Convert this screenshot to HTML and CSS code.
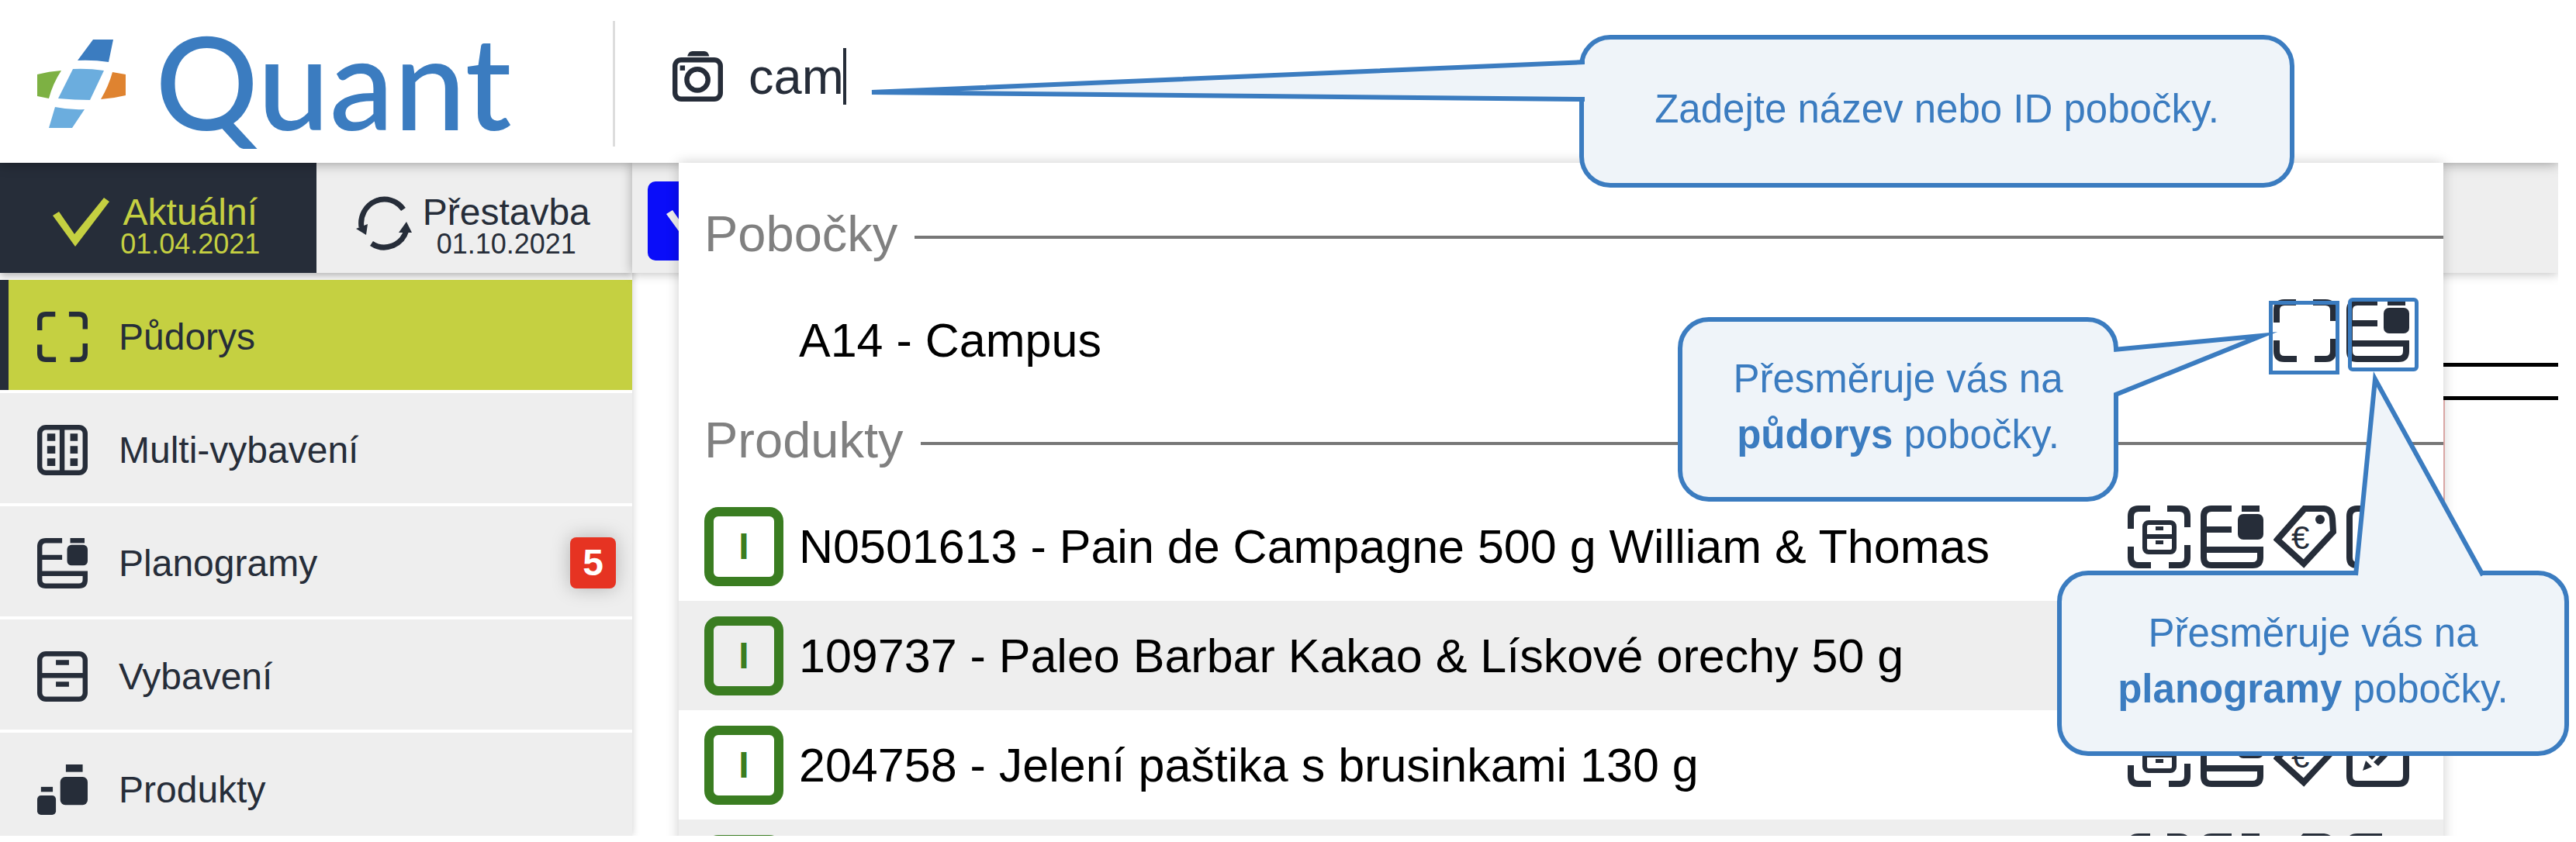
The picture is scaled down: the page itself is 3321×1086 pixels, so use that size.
FILE: index.html
```html
<!DOCTYPE html>
<html lang="cs">
<head>
    <meta charset="UTF-8">
    <meta name="viewport" content="width=device-width, initial-scale=1.0">
    <title>Quant</title>
    <link rel="stylesheet" href="styles.css">
</head>
<body>
    <!-- Icon set -->
    <svg class="sprite" aria-hidden="true">
        <symbol id="i-floor" viewBox="0 0 81 81">
            <path class="line" d="M4 30V14Q4 4 14 4H29M51 4H67Q77 4 77 14V28M77 51V67Q77 77 67 77H53M30 77H14Q4 77 4 67V53"/>
        </symbol>
        <symbol id="i-multi" viewBox="0 0 81 81">
            <rect class="line" x="4" y="4" width="73" height="73" rx="10"/>
            <path class="line" d="M40 4V77"/>
            <path d="M16 14h13v12H16zM16 34h13v12H16zM16 54h13v12H16zM53 14h12v12H53zM53 34h12v12H53zM53 54h12v12H53z"/>
        </symbol>
        <symbol id="i-plano" viewBox="0 0 81 81">
            <path class="line" d="M40 4H14Q4 4 4 14V67Q4 77 14 77H67Q77 77 77 67V57H4M4 31H40"/>
            <rect x="53" y="0" width="23" height="8"/>
            <rect x="48" y="11" width="33" height="33" rx="7"/>
        </symbol>
        <symbol id="i-cabinet" viewBox="0 0 81 81">
            <rect class="line" x="4" y="4" width="73" height="73" rx="10"/>
            <path class="line" d="M4 39H77"/>
            <path d="M30 14h21v8H30zM30 49h21v8H30z"/>
        </symbol>
        <symbol id="i-products" viewBox="0 0 81 81">
            <rect x="46" y="0" width="27" height="12"/>
            <rect x="37" y="20" width="44" height="45" rx="8"/>
            <rect x="6" y="36" width="19" height="8"/>
            <rect x="0" y="50" width="30" height="31" rx="6"/>
        </symbol>
        <symbol id="i-place" viewBox="0 0 81 81">
            <path class="line" d="M4 30V14Q4 4 14 4H29M51 4H67Q77 4 77 14V28M77 51V67Q77 77 67 77H53M30 77H14Q4 77 4 67V53"/>
            <rect class="line thin" x="22" y="22" width="38" height="38" rx="5"/>
            <path class="line thin" d="M22 40H60"/>
            <path d="M36 27h10v5H36zM36 45h10v5H36z"/>
        </symbol>
        <symbol id="i-tag" viewBox="0 0 81 81">
            <path class="line" d="M5 44L40 4H65Q75 5 76 17L77 34L39 75Z"/>
            <circle cx="60" cy="18" r="6"/>
            <text x="23" y="56" font-size="42">€</text>
        </symbol>
        <symbol id="i-edit" viewBox="0 0 81 81">
            <path class="line" d="M46 4H14Q4 4 4 14V67Q4 77 14 77H67Q77 77 77 67V38"/>
            <path d="M21 60L25 47L33 55ZM28 41L64 4L69 9L33 46ZM35 49L72 12L77 16L41 54Z"/>
        </symbol>
        <symbol id="i-camera" viewBox="0 0 81 81">
            <path d="M24 8Q26 0 32 0H51Q57 0 59 8Z"/>
            <rect class="line" x="4" y="14" width="73" height="63" rx="10"/>
            <rect x="12" y="23" width="8" height="8"/>
            <circle class="line" cx="40" cy="46" r="17"/>
        </symbol>
    </svg>

    <div class="app">
        <header class="header">
            <a class="logo" href="#">
                <svg class="logo-mark" viewBox="0 0 114 114" aria-hidden="true">
                    <path fill="#3b7cc0" d="M72 0H98L92 29Q72 26 52 27Z"/>
                    <path fill="#6badde" d="M46 38Q66 37 86 40L68 78Q48 78 27 76Z"/>
                    <path fill="#6badde" d="M23 87Q42 91 61 90L45 114H15Z"/>
                    <path fill="#7db143" d="M0 45Q15 41 31 40Q20 57 15 76L0 73Z"/>
                    <path fill="#df8330" d="M97 42L114 45V72Q98 76 82 77Q92 60 97 42Z"/>
                </svg>
                <span class="logo-text">Quant</span>
            </a>
            <label class="search">
                <svg class="icon" role="img" aria-label="Hledat"><use href="#i-camera"/></svg>
                <input class="search-input" type="text" value="cam">
                <span class="caret"></span>
            </label>
        </header>

        <div class="body">
            <aside class="sidebar">
                <div class="tabs">
                    <button class="tab active" type="button">
                        <svg class="tab-icon" viewBox="0 0 74 64"><path d="M0 23L8 18L28 47L66 0L73 5L29 63Z"/></svg>
                        <span class="tab-label">Aktuální<small>01.04.2021</small></span>
                    </button>
                    <button class="tab" type="button">
                        <svg class="tab-icon" viewBox="0 0 72 72">
                            <path class="line medium" d="M61 19A30 31 0 0 0 7 42M20 63A30 31 0 0 0 65 46"/>
                            <path d="M0 44L15 38L13 52ZM55 49L65 35L72 49Z"/>
                        </svg>
                        <span class="tab-label">Přestavba<small>01.10.2021</small></span>
                    </button>
                </div>
                <nav class="menu">
                    <a class="menu-item active" href="#"><svg class="icon"><use href="#i-floor"/></svg>Půdorys</a>
                    <a class="menu-item" href="#"><svg class="icon"><use href="#i-multi"/></svg>Multi-vybavení</a>
                    <a class="menu-item" href="#"><svg class="icon"><use href="#i-plano"/></svg>Planogramy<span class="count">5</span></a>
                    <a class="menu-item" href="#"><svg class="icon"><use href="#i-cabinet"/></svg>Vybavení</a>
                    <a class="menu-item" href="#"><svg class="icon"><use href="#i-products"/></svg>Produkty</a>
                </nav>
            </aside>

            <main class="main">
                <div class="toolbar">
                    <button class="confirm" type="button" aria-label="Potvrdit">
                        <svg class="tab-icon" viewBox="0 0 74 64"><path d="M0 23L8 18L28 47L66 0L73 5L29 63Z"/></svg>
                    </button>
                </div>
                <div class="floorplan">
                    <div class="wall"></div>
                    <div class="zone"></div>
                </div>

                <!-- Search results -->
                <div class="results">
                    <h2 class="group"><span>Pobočky</span></h2>
                    <div class="row">
                        <span class="status-space"></span>
                        <span class="name">A14 - Campus</span>
                        <span class="actions">
                            <button type="button" aria-label="Půdorys"><svg><use href="#i-floor"/></svg></button>
                            <button type="button" aria-label="Planogramy"><svg><use href="#i-plano"/></svg></button>
                        </span>
                    </div>
                    <h2 class="group"><span>Produkty</span></h2>
                    <div class="row">
                        <span class="status">I</span>
                        <span class="name">N0501613 - Pain de Campagne 500 g William &amp; Thomas</span>
                        <span class="actions">
                            <button type="button" aria-label="Umístění"><svg><use href="#i-place"/></svg></button>
                            <button type="button" aria-label="Planogramy"><svg><use href="#i-plano"/></svg></button>
                            <button type="button" aria-label="Cena"><svg><use href="#i-tag"/></svg></button>
                            <button type="button" aria-label="Upravit"><svg><use href="#i-edit"/></svg></button>
                        </span>
                    </div>
                    <div class="row shaded">
                        <span class="status">I</span>
                        <span class="name">109737 - Paleo Barbar Kakao &amp; Lískové orechy 50 g</span>
                        <span class="actions">
                            <button type="button" aria-label="Umístění"><svg><use href="#i-place"/></svg></button>
                            <button type="button" aria-label="Planogramy"><svg><use href="#i-plano"/></svg></button>
                            <button type="button" aria-label="Cena"><svg><use href="#i-tag"/></svg></button>
                            <button type="button" aria-label="Upravit"><svg><use href="#i-edit"/></svg></button>
                        </span>
                    </div>
                    <div class="row">
                        <span class="status">I</span>
                        <span class="name">204758 - Jelení paštika s brusinkami 130 g</span>
                        <span class="actions">
                            <button type="button" aria-label="Umístění"><svg><use href="#i-place"/></svg></button>
                            <button type="button" aria-label="Planogramy"><svg><use href="#i-plano"/></svg></button>
                            <button type="button" aria-label="Cena"><svg><use href="#i-tag"/></svg></button>
                            <button type="button" aria-label="Upravit"><svg><use href="#i-edit"/></svg></button>
                        </span>
                    </div>
                    <div class="row shaded">
                        <span class="status"></span>
                        <span class="name"></span>
                        <span class="actions">
                            <button type="button" aria-label="Umístění"><svg><use href="#i-place"/></svg></button>
                            <button type="button" aria-label="Planogramy"><svg><use href="#i-plano"/></svg></button>
                            <button type="button" aria-label="Cena"><svg><use href="#i-tag"/></svg></button>
                            <button type="button" aria-label="Upravit"><svg><use href="#i-edit"/></svg></button>
                        </span>
                    </div>
                </div>
            </main>
        </div>
    </div>

    <!-- Help callouts -->
    <div class="mark mark-floor"></div>
    <div class="mark mark-plano"></div>

    <div class="callout callout-search">
        <svg class="tail" width="926" height="80"><path d="M926 23L7 62L926 71"/></svg>
        <p>Zadejte název nebo ID pobočky.</p>
    </div>
    <div class="callout callout-floor">
        <svg class="tail" width="220" height="100"><path d="M0 31L191 13L0 90"/></svg>
        <p>Přesměruje vás na<br><b>půdorys</b> pobočky.</p>
    </div>
    <div class="callout callout-plano">
        <svg class="tail" width="180" height="270"><path d="M7 265L32 12L171 265"/></svg>
        <p>Přesměruje vás na<br><b>planogramy</b> pobočky.</p>
    </div>
</body>
</html>
```

FILE: styles.css
```css
* {
    box-sizing: border-box;
}
body {
    position: relative;
    margin: 0;
    padding: 0 23px 8px 0;
    height: 100vh;
    overflow: hidden;
    background: #fff;
    color: #262d39;
    font-family: "Liberation Sans", Arial, sans-serif;
    font-size: 48px;
}
button {
    margin: 0;
    padding: 0;
    border: none;
    background: none;
    color: inherit;
    font: inherit;
    cursor: pointer;
}
a {
    color: inherit;
    text-decoration: none;
}
svg {
    display: block;
    fill: currentColor;
}
.sprite {
    display: none;
}
.line {
    fill: none;
    stroke: currentColor;
    stroke-width: 8;
}
.medium {
    stroke-width: 7;
}
.thin {
    stroke-width: 6;
}
.icon {
    flex: none;
    width: 65px;
    height: 65px;
}
.app {
    display: flex;
    flex-direction: column;
    height: 100%;
    overflow: hidden;
}

/* --- HEADER --- */
.header {
    position: relative;
    z-index: 2;
    flex: none;
    display: flex;
    align-items: center;
    height: 210px;
    padding-top: 6px;
    background: #fff;
    box-shadow: 0 0 16px rgba(0, 0, 0, 0.4);
}
.logo {
    display: flex;
    align-items: center;
    gap: 38px;
    width: 793px;
    height: 162px;
    padding-left: 48px;
    border-right: 3px solid #ddd;
    color: #3b7cc0;
}
.logo-mark {
    width: 114px;
    height: 114px;
}
.logo-text {
    padding-bottom: 8px;
    font-family: Lato, sans-serif;
    font-size: 166px;
    font-weight: 500;
    line-height: 162px;
}
.search {
    display: flex;
    align-items: center;
    padding: 0 0 20px 74px;
}
.search-input {
    width: 122px;
    margin-left: 33px;
    padding: 0;
    border: none;
    outline: none;
    background: none;
    color: inherit;
    font-family: inherit;
    font-size: 65px;
}
.caret {
    width: 4px;
    height: 73px;
    background: #262d39;
}

/* --- SIDEBAR --- */
.body {
    flex: 1;
    display: flex;
    min-height: 0;
}
.sidebar {
    flex: none;
    width: 815px;
    box-shadow: 0 0 10px rgba(0, 0, 0, 0.2);
}
.tabs {
    display: flex;
    box-shadow: 0 4px 10px rgba(0, 0, 0, 0.3);
}
.tab {
    flex: 1;
    display: flex;
    justify-content: center;
    align-items: center;
    gap: 13px;
    height: 142px;
    padding: 24px 4px 0 0;
    background: #eee;
}
.tab.active {
    background: #262d39;
    color: #c5d041;
}
.tab-icon {
    flex: none;
    width: 74px;
    height: 72px;
    margin-bottom: 12px;
    overflow: visible;
}
.tab-label {
    line-height: 44px;
}
.tab-label small {
    display: block;
    font-size: 36px;
    line-height: 38px;
}
.menu {
    display: flex;
    flex-direction: column;
    gap: 4px;
    padding-top: 9px;
}
.menu-item {
    flex: none;
    display: flex;
    align-items: center;
    gap: 40px;
    height: 142px;
    padding: 4px 21px 0 48px;
    background: #eee;
}
.menu-item.active {
    background: #c5d041;
    box-shadow: inset 11px 0 #262d39;
}
.count {
    width: 59px;
    margin-left: auto;
    border-radius: 8px;
    background: #e63322;
    box-shadow: 0 0 24px rgba(0, 0, 0, 0.25);
    color: #fff;
    font-weight: bold;
    line-height: 66px;
    text-align: center;
}

/* --- MAIN --- */
.main {
    position: relative;
    flex: 1;
    min-width: 0;
}
.toolbar {
    display: flex;
    align-items: center;
    height: 142px;
    padding: 8px 0 0 20px;
    background: #eee;
    box-shadow: 0 0 14px rgba(0, 0, 0, 0.3);
}
.confirm {
    height: 102px;
    padding: 12px 24px 0;
    border-radius: 10px;
    background: #0a0df9;
    color: #eee;
}
.floorplan {
    width: 148px;
    margin: 116px 0 0 auto;
}
.wall {
    height: 48px;
    border: solid #000;
    border-width: 5px 0;
}
.zone {
    height: 130px;
    border-left: 2px solid #efb8b4;
}

/* --- SEARCH RESULTS --- */
.results {
    position: absolute;
    z-index: 3;
    top: 0;
    left: 60px;
    right: 148px;
    padding-top: 33px;
    background: #fff;
    box-shadow: 0 0 16px rgba(0, 0, 0, 0.2);
    color: #000;
}
.group {
    display: flex;
    align-items: center;
    gap: 22px;
    height: 125px;
    margin: 0;
    padding-left: 33px;
    color: #808080;
    font-size: 65px;
    font-weight: normal;
}
.group span {
    padding-bottom: 8px;
}
.group::after {
    content: "";
    flex: 1;
    height: 4px;
    background: #777;
}
.row {
    display: flex;
    align-items: center;
    gap: 20px;
    height: 141px;
    padding: 0 44px 0 33px;
    font-size: 61px;
}
.row.shaded {
    background: #eee;
}
.status,
.status-space {
    flex: none;
    width: 102px;
    height: 102px;
}
.status {
    border: 12px solid #3a7d21;
    border-radius: 18px;
    color: #3a7d21;
    font-size: 48px;
    font-weight: bold;
    line-height: 78px;
    text-align: center;
}
.name {
    flex: 1;
    white-space: nowrap;
}
.actions {
    display: flex;
    gap: 13px;
    margin-bottom: 24px;
    color: #262d39;
}
.actions svg {
    width: 81px;
    height: 81px;
}

/* --- HELP CALLOUTS --- */
.callout {
    position: absolute;
    z-index: 5;
    display: flex;
    justify-content: center;
    align-items: center;
    padding-bottom: 6px;
    border: 6px solid #3b7cc0;
    border-radius: 40px;
    background: #eff4f9;
    color: #3b7cc0;
    font-size: 51px;
    line-height: 72px;
    text-align: center;
}
.callout p {
    margin: 0;
}
.callout-search {
    top: 45px;
    left: 2036px;
    width: 922px;
    height: 197px;
}
.callout-floor {
    top: 409px;
    left: 2163px;
    width: 568px;
    height: 238px;
}
.callout-plano {
    top: 736px;
    left: 2652px;
    width: 660px;
    height: 239px;
}
.tail {
    position: absolute;
    fill: #eff4f9;
    stroke: #3b7cc0;
    stroke-width: 6;
    stroke-miterlimit: 10;
}
.callout-search .tail {
    top: 6px;
    right: 909px;
}
.callout-floor .tail {
    top: 5px;
    left: 556px;
}
.callout-plano .tail {
    left: 372px;
    bottom: 222px;
}
.mark {
    position: absolute;
    z-index: 4;
    width: 91px;
    height: 95px;
    border: 5px solid #3b7cc0;
}
.mark-floor {
    top: 388px;
    left: 2925px;
}
.mark-plano {
    top: 384px;
    left: 3027px;
    border-radius: 6px;
}
```
